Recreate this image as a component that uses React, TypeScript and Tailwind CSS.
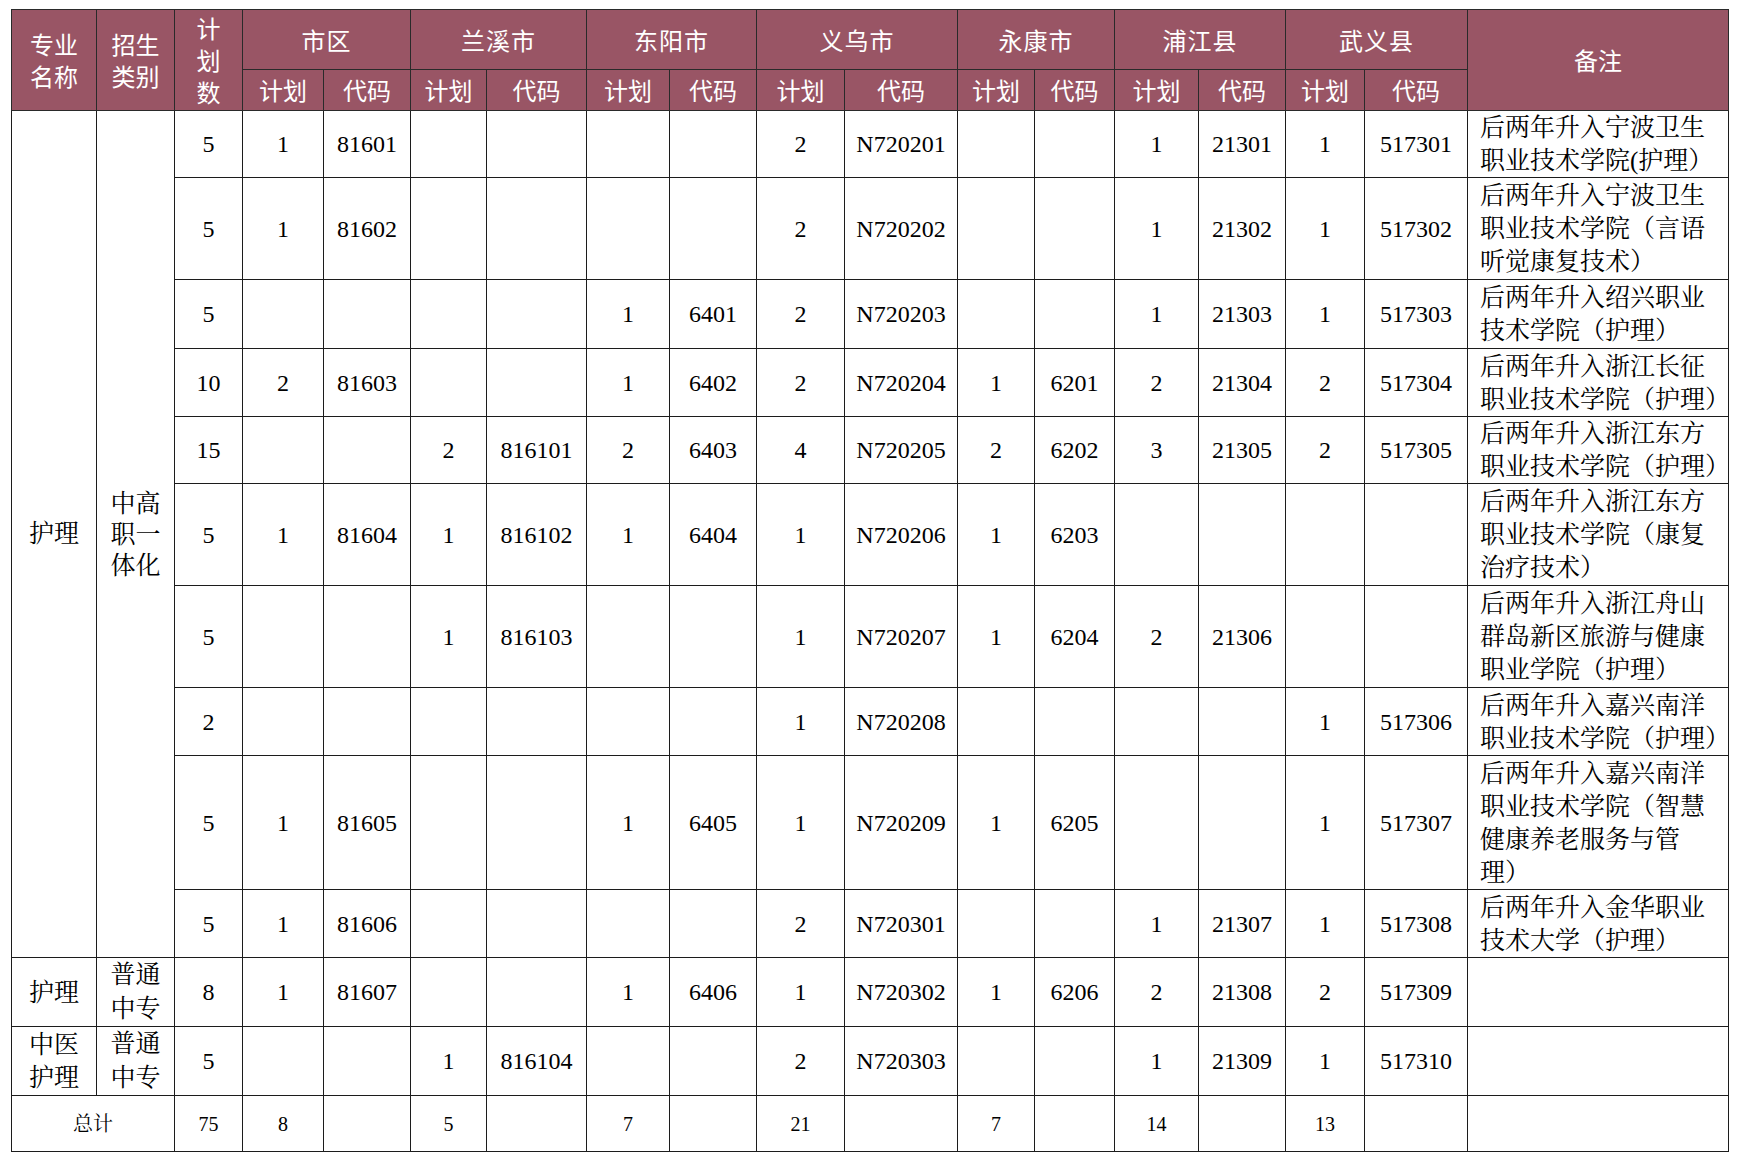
import React from 'react';

const colWidths = [85, 78, 68, 81, 87, 76, 100, 83, 87, 88, 113, 77, 80, 84, 87, 79, 103, 261];

const cities = ['市区', '兰溪市', '东阳市', '义乌市', '永康市', '浦江县', '武义县'];

interface DataRow {
  h: string;
  cells: string[];
  note: string[];
}

// cells: 计划数, then 计划/代码 for each of the 7 areas
const rows: DataRow[] = [
  { h: 'h-[67px]', cells: ['5', '1', '81601', '', '', '', '', '2', 'N720201', '', '', '1', '21301', '1', '517301'], note: ['后两年升入宁波卫生', '职业技术学院(护理）'] },
  { h: 'h-[102px]', cells: ['5', '1', '81602', '', '', '', '', '2', 'N720202', '', '', '1', '21302', '1', '517302'], note: ['后两年升入宁波卫生', '职业技术学院（言语', '听觉康复技术）'] },
  { h: 'h-[69px]', cells: ['5', '', '', '', '', '1', '6401', '2', 'N720203', '', '', '1', '21303', '1', '517303'], note: ['后两年升入绍兴职业', '技术学院（护理）'] },
  { h: 'h-[68px]', cells: ['10', '2', '81603', '', '', '1', '6402', '2', 'N720204', '1', '6201', '2', '21304', '2', '517304'], note: ['后两年升入浙江长征', '职业技术学院（护理）'] },
  { h: 'h-[67px]', cells: ['15', '', '', '2', '816101', '2', '6403', '4', 'N720205', '2', '6202', '3', '21305', '2', '517305'], note: ['后两年升入浙江东方', '职业技术学院（护理）'] },
  { h: 'h-[102px]', cells: ['5', '1', '81604', '1', '816102', '1', '6404', '1', 'N720206', '1', '6203', '', '', '', ''], note: ['后两年升入浙江东方', '职业技术学院（康复', '治疗技术）'] },
  { h: 'h-[102px]', cells: ['5', '', '', '1', '816103', '', '', '1', 'N720207', '1', '6204', '2', '21306', '', ''], note: ['后两年升入浙江舟山', '群岛新区旅游与健康', '职业学院（护理）'] },
  { h: 'h-[68px]', cells: ['2', '', '', '', '', '', '', '1', 'N720208', '', '', '', '', '1', '517306'], note: ['后两年升入嘉兴南洋', '职业技术学院（护理）'] },
  { h: 'h-[134px]', cells: ['5', '1', '81605', '', '', '1', '6405', '1', 'N720209', '1', '6205', '', '', '1', '517307'], note: ['后两年升入嘉兴南洋', '职业技术学院（智慧', '健康养老服务与管', '理）'] },
  { h: 'h-[68px]', cells: ['5', '1', '81606', '', '', '', '', '2', 'N720301', '', '', '1', '21307', '1', '517308'], note: ['后两年升入金华职业', '技术大学（护理）'] },
];

const extraRows = [
  { h: 'h-[69px]', major: ['护理'], kind: ['普通', '中专'], cells: ['8', '1', '81607', '', '', '1', '6406', '1', 'N720302', '1', '6206', '2', '21308', '2', '517309'] },
  { h: 'h-[68px]', major: ['中医', '护理'], kind: ['普通', '中专'], cells: ['5', '', '', '1', '816104', '', '', '2', 'N720303', '', '', '1', '21309', '1', '517310'] },
];

const totals = ['75', '8', '', '5', '', '7', '', '21', '', '7', '', '14', '', '13', ''];

const th = 'border border-[#2a2a2a] bg-[#995565] text-white font-normal text-[24px] p-0 text-center align-middle';
const td = 'border border-[#1c1c1c] p-0 text-center align-middle';
const cjk = "font-['Liberation_Serif','Noto_Serif_CJK_SC','Noto_Sans_CJK_SC',serif]";

function Lines({ lines }: { lines: string[] }) {
  return (
    <>
      {lines.map((l, i) => (
        <div key={i}>{l}</div>
      ))}
    </>
  );
}

export default function App() {
  return (
    <div className="min-h-screen bg-white pl-[11px] pt-[9px]">
      <table className={`table-fixed border-collapse w-[1717px] text-black text-[24px] ${cjk}`}>
        <colgroup>
          {colWidths.map((w, i) => (
            <col key={i} style={{ width: w }} />
          ))}
        </colgroup>
        <thead className="font-['Noto_Sans_CJK_SC',sans-serif]">
          <tr className="h-[60px]">
            <th rowSpan={2} className={`${th} leading-[32px]`}>
              <div>专业</div>
              <div>名称</div>
            </th>
            <th rowSpan={2} className={`${th} leading-[32px]`}>
              <div>招生</div>
              <div>类别</div>
            </th>
            <th rowSpan={2} className={`${th} leading-[32px]`}>
              <div>计</div>
              <div>划</div>
              <div>数</div>
            </th>
            {cities.map((c) => (
              <th key={c} colSpan={2} className={`${th} tracking-[1px]`}>
                {c}
              </th>
            ))}
            <th rowSpan={2} className={th}>
              备注
            </th>
          </tr>
          <tr className="h-[41px]">
            {cities.map((c) => (
              <React.Fragment key={c}>
                <th className={th}>计划</th>
                <th className={th}>代码</th>
              </React.Fragment>
            ))}
          </tr>
        </thead>
        <tbody>
          {rows.map((r, ri) => (
            <tr key={ri} className={r.h}>
              {ri === 0 && (
                <>
                  <td rowSpan={rows.length} className={`${td} text-[25px]`}>
                    护理
                  </td>
                  <td rowSpan={rows.length} className={`${td} text-[25px] leading-[31px]`}>
                    <Lines lines={['中高', '职一', '体化']} />
                  </td>
                </>
              )}
              {r.cells.map((c, ci) => (
                <td key={ci} className={td}>
                  {c}
                </td>
              ))}
              <td className={`${td} text-left pl-[12px] text-[25px] leading-[33px] whitespace-nowrap overflow-visible`}>
                <Lines lines={r.note} />
              </td>
            </tr>
          ))}
          {extraRows.map((r, ri) => (
            <tr key={`x${ri}`} className={r.h}>
              <td className={`${td} text-[25px] leading-[33px]`}>
                <Lines lines={r.major} />
              </td>
              <td className={`${td} text-[25px] leading-[34px]`}>
                <Lines lines={r.kind} />
              </td>
              {r.cells.map((c, ci) => (
                <td key={ci} className={td}>
                  {c}
                </td>
              ))}
              <td className={td}></td>
            </tr>
          ))}
          <tr className="h-[56px] text-[20px]">
            <td colSpan={2} className={td}>
              总计
            </td>
            {totals.map((c, ci) => (
              <td key={ci} className={td}>
                {c}
              </td>
            ))}
            <td className={td}></td>
          </tr>
        </tbody>
      </table>
    </div>
  );
}
